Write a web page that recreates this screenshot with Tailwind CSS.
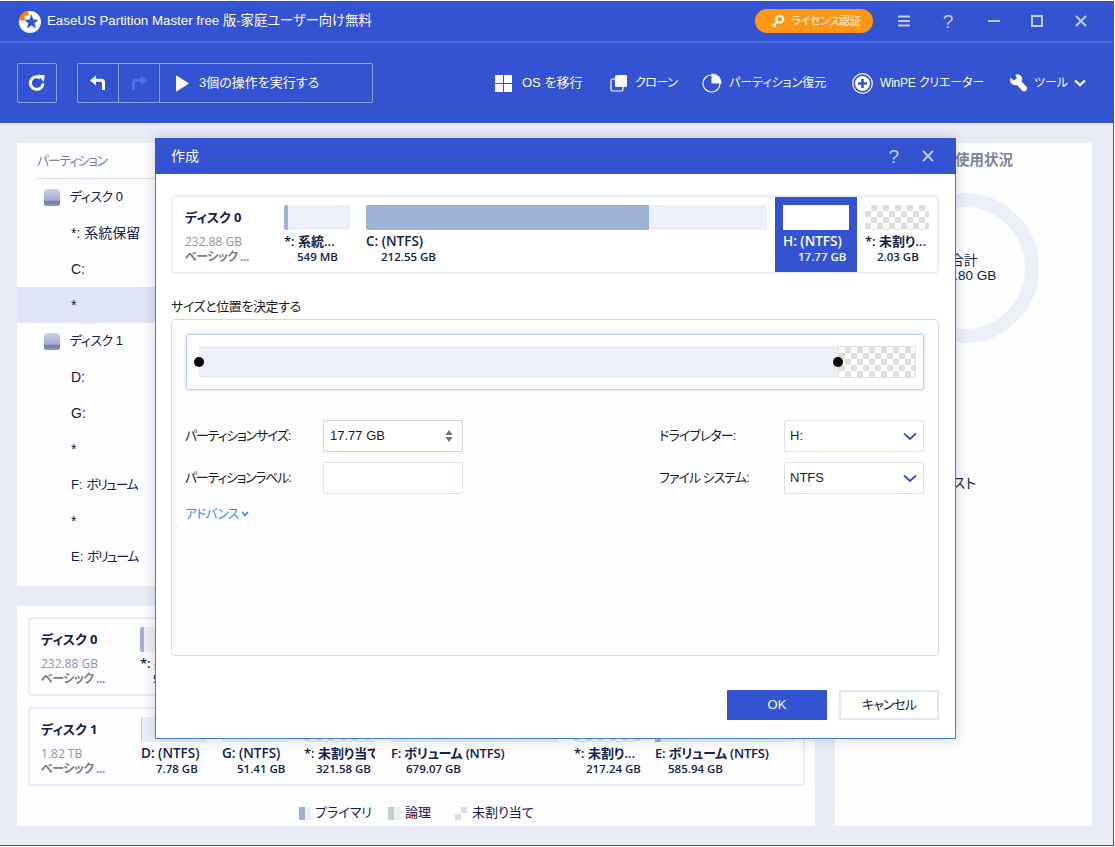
<!DOCTYPE html>
<html lang="ja">
	<head>
		<meta charset="UTF-8" />
		<title>EaseUS Partition Master</title>
		<script src="https://cdn.jsdelivr.net/npm/@tailwindcss/browser@4"></script>
	</head>
	<body class="bg-white font-['Liberation_Sans','Noto_Sans_CJK_JP',sans-serif] [font-feature-settings:'palt'] text-[13px] text-[#12204a]">
		<div class="relative mt-px w-[1114px] h-[845px] overflow-hidden border-r border-b border-[#3353d3] bg-[#e9ecf7]">
			<!-- TITLE BAR -->
			<header class="flex items-center h-[40px] pl-[18px] pr-[25px] bg-[#3353d3] text-white">
				<svg class="w-[23px] h-[23px] shrink-0" viewBox="0 0 24 24">
					<circle cx="12.500" cy="12.500" r="11.500" fill="#fff" />
					<path d="M1 11 A11 11 0 0 1 11 1 V6 H7 V11 Z" fill="#f58400" />
					<path d="M14 4.500 L16 10 L21.500 10.300 L17.200 13.800 L18.700 19.200 L14 16.100 L9.300 19.200 L10.800 13.800 L6.500 10.300 L12 10 Z" fill="#3353d3" />
				</svg>
				<span class="ml-[6px] text-[13.300px] whitespace-nowrap">EaseUS Partition Master free 版-家庭ユーザー向け無料</span>
				<div class="ml-auto flex items-center shrink-0 h-[24px] w-[118px] pl-[16px] gap-[6px] rounded-full bg-[#ff9614] text-[11px] tracking-[-0.2px] whitespace-nowrap">
					<svg class="w-[14px] h-[14px] shrink-0" viewBox="0 0 16 16">
						<circle cx="10" cy="6" r="4" fill="none" stroke="#fff" stroke-width="2.400" />
						<path d="M7 9 L2 14 M3.500 12.500 L5.500 14.500" stroke="#fff" stroke-width="2.400" fill="none" />
					</svg>
					<span>ライセンス認証</span>
				</div>
				<svg class="ml-[24px] w-[14px] h-[14px] shrink-0" viewBox="0 0 14 14"><path d="M1 2.500 H13 M1 7 H13 M1 11.500 H13" stroke="#c3cdf3" stroke-width="2" /></svg>
				<span class="ml-[29px] w-[16px] shrink-0 text-center text-[19px] leading-none text-[#c3cdf3]">?</span>
				<svg class="ml-[31px] w-[14px] h-[14px] shrink-0" viewBox="0 0 14 14"><path d="M1 7 H13" stroke="#c3cdf3" stroke-width="2" /></svg>
				<svg class="ml-[29px] w-[14px] h-[14px] shrink-0" viewBox="0 0 14 14"><rect x="2" y="2" width="10" height="10" fill="none" stroke="#c3cdf3" stroke-width="2" /></svg>
				<svg class="ml-[30px] w-[14px] h-[14px] shrink-0" viewBox="0 0 14 14"><path d="M2 2 L12 12 M12 2 L2 12" stroke="#c3cdf3" stroke-width="2" /></svg>
			</header>
			<div class="h-[2px] bg-[#4a6be2]"></div>

			<!-- TOOLBAR -->
			<nav class="flex items-center h-[80px] pl-[17px] bg-[#3353d3] text-white whitespace-nowrap">
				<button class="flex items-center justify-center shrink-0 w-[40px] h-[40px] rounded-[2px] border border-[#8fa3ea]">
					<svg class="w-[20px] h-[20px]" viewBox="0 0 20 20">
						<path d="M16 10.500 A6.300 6.300 0 1 1 13.500 5" fill="none" stroke="#fff" stroke-width="3" />
						<path d="M11 1.500 L18 2.500 L16.500 9 Z" fill="#fff" />
					</svg>
				</button>
				<div class="flex items-center shrink-0 ml-[20px] w-[296px] h-[40px] rounded-[2px] border border-[#8fa3ea]">
					<div class="flex items-center justify-center w-[41px] h-full border-r border-[#8fa3ea]">
						<svg class="w-[18px] h-[18px]" viewBox="0 0 18 18"><path d="M1 6.500 L7 1.500 V4.800 H12.500 Q16 4.800 16 8.500 V16 H13 V9.200 Q13 7.800 11.500 7.800 H7 V11.500 Z" fill="#fff" /></svg>
					</div>
					<div class="flex items-center justify-center w-[41px] h-full border-r border-[#8fa3ea]">
						<svg class="w-[18px] h-[18px]" viewBox="0 0 18 18"><path d="M17 6.500 L11 1.500 V4.800 H5.500 Q2 4.800 2 8.500 V16 H5 V9.200 Q5 7.800 6.500 7.800 H11 V11.500 Z" fill="#4f6fe6" /></svg>
					</div>
					<svg class="ml-[16px] w-[13px] h-[17px]" viewBox="0 0 14 18"><path d="M0 0 L14 9 L0 18 Z" fill="#fff" /></svg>
					<span class="ml-[10px] text-[13px]">3個の操作を実行する</span>
				</div>
				<!-- right tools -->
				<svg class="ml-[122px] w-[17px] h-[17px] shrink-0" viewBox="0 0 17 17"><path d="M0 0 H8 V8 H0 Z M9 0 H17 V8 H9 Z M0 9 H8 V17 H0 Z M9 9 H17 V17 H9 Z" fill="#fff" /></svg>
				<span class="ml-[10px] w-[59px] shrink-0">OS を移行</span>
				<svg class="ml-[29px] w-[18px] h-[18px] shrink-0" viewBox="0 0 18 18">
					<rect x="1" y="5" width="12" height="12" rx="1.500" fill="none" stroke="#fff" stroke-width="1.200" />
					<rect x="5" y="1" width="12" height="12" rx="1.500" fill="#fff" />
				</svg>
				<span class="ml-[7px] w-[41px] shrink-0 text-[12px] tracking-[-0.5px]">クローン</span>
				<svg class="ml-[26px] w-[20px] h-[20px] shrink-0" viewBox="0 0 20 20">
					<circle cx="9.500" cy="10.500" r="8.500" fill="none" stroke="#fff" stroke-width="1.200" />
					<path d="M9.500 0.500 A9.500 9.500 0 0 1 19.500 10.500 H9.500 Z" fill="#fff" />
				</svg>
				<span class="ml-[7px] w-[98px] shrink-0 text-[12px]">パーティション復元</span>
				<svg class="ml-[25px] w-[21px] h-[21px] shrink-0" viewBox="0 0 21 21">
					<circle cx="10.500" cy="10.500" r="9.800" fill="none" stroke="#fff" stroke-width="1.200" />
					<circle cx="10.500" cy="10.500" r="7.500" fill="#fff" />
					<path d="M10.500 6 V15 M6 10.500 H15" stroke="#3353d3" stroke-width="2.600" />
				</svg>
				<span class="ml-[7px] w-[103px] shrink-0 text-[12px] tracking-[-0.2px]">WinPE クリエーター</span>
				<svg class="ml-[27px] w-[17px] h-[18px] shrink-0" viewBox="0 0 17 18"><path d="M5.500 0.500 Q10 -0.500 11.800 3 Q12.800 5.500 11.500 7.500 L16.800 13 Q17.500 16 14.800 17.500 L12.500 17 L7 11 Q3 12 1 9 Q-0.500 6.500 0.500 3.500 L3.800 6.500 L6.800 4.500 Z" fill="#fff" /></svg>
				<span class="ml-[7px] w-[34px] shrink-0 text-[12px]">ツール</span>
				<svg class="ml-[6px] w-[12px] h-[8px] shrink-0" viewBox="0 0 12 8"><path d="M1 1.500 L6 6 L11 1.500" fill="none" stroke="#fff" stroke-width="2.200" /></svg>
			</nav>

			<!-- MAIN -->
			<main class="flex gap-[20px] pt-[20px] pl-[17px]">
				<div class="flex flex-col gap-[20px] w-[798px]">
					<!-- partition tree -->
					<section class="h-[443px] bg-[#fdfdff] text-[14px]">
						<div class="flex items-center h-[36px] mx-[20px] border-b border-[#d9deec] text-[13px] tracking-[-1.400px] text-[#7d8498]">パーティション</div>
						<div class="flex items-center h-[36px] pl-[27px]">
							<span class="w-[16px] h-[17px] rounded-t-[4px] rounded-b-[2px] bg-[linear-gradient(#c9d1e8,#a4b0d4_65%,#6b78a8_75%,#8f9cc6)]"></span>
							<span class="ml-[10px] text-[13px] tracking-[-0.5px]">ディスク 0</span>
						</div>
						<div class="flex items-center h-[36px] pl-[54px]">*: 系統保留</div>
						<div class="flex items-center h-[36px] pl-[54px]">C:</div>
						<div class="flex items-center h-[36px] pl-[54px] bg-[#e0e5f7]">*</div>
						<div class="flex items-center h-[36px] pl-[27px]">
							<span class="w-[16px] h-[17px] rounded-t-[4px] rounded-b-[2px] bg-[linear-gradient(#c9d1e8,#a4b0d4_65%,#6b78a8_75%,#8f9cc6)]"></span>
							<span class="ml-[10px] text-[13px] tracking-[-0.5px]">ディスク 1</span>
						</div>
						<div class="flex items-center h-[36px] pl-[54px]">D:</div>
						<div class="flex items-center h-[36px] pl-[54px]">G:</div>
						<div class="flex items-center h-[36px] pl-[54px]">*</div>
						<div class="h-[36px] pl-[54px] text-[13px] leading-[36px] whitespace-pre">F: <span class="tracking-[-1.600px]">ボリューム</span></div>
						<div class="flex items-center h-[36px] pl-[54px]">*</div>
						<div class="h-[36px] pl-[54px] text-[13px] leading-[36px] whitespace-pre">E: <span class="tracking-[-1.600px]">ボリューム</span></div>
					</section>

					<!-- disk map -->
					<section class="h-[220px] pl-[11px] pr-[10px] pt-[11px] bg-[#fdfdff] font-['Open_Sans','Noto_Sans_CJK_JP',sans-serif]">
						<div class="flex h-[79px] rounded-[4px] border-2 border-[#e9edf7]">
							<div class="w-[103px] pl-[11px] pt-[10px] shrink-0">
								<div class="font-bold leading-[20px]">ディスク 0</div>
								<div class="mt-[7px] text-[12px] leading-[15px] text-[#8d94ad]">232.88 GB</div>
								<div class="text-[12px] tracking-[-0.5px] leading-[15px] font-semibold text-[#757c94] whitespace-nowrap">ベーシック ...</div>
							</div>
							<div class="w-[82px] px-[7px] pt-[8px]">
								<div class="h-[25px] rounded-[2px] bg-[#eceff8] border-l-4 border-[#9db3d6]"></div>
								<div class="mt-[2px] text-[13px] leading-[18px] font-semibold whitespace-nowrap overflow-hidden">*: 系統...</div>
								<div class="pl-[13px] text-[11.500px] leading-[13px] font-semibold whitespace-nowrap">549 MB</div>
							</div>
						</div>
						<div class="flex h-[79px] mt-[11px] rounded-[4px] border-2 border-[#e9edf7]">
							<div class="w-[103px] pl-[11px] pt-[10px] shrink-0">
								<div class="font-bold leading-[20px]">ディスク 1</div>
								<div class="mt-[7px] text-[12px] leading-[15px] text-[#8d94ad]">1.82 TB</div>
								<div class="text-[12px] tracking-[-0.5px] leading-[15px] font-semibold text-[#757c94] whitespace-nowrap">ベーシック ...</div>
							</div>
							<div class="w-[81px] px-[8px] pt-[8px]">
								<div class="h-[25px] bg-[#eceff8] border-l border-[#b9d1bd]"></div>
								<div class="mt-[2px] text-[13.500px] leading-[18px] font-semibold whitespace-nowrap">D: (NTFS)</div>
								<div class="pl-[15px] text-[11.500px] leading-[13px] font-semibold whitespace-nowrap">7.78 GB</div>
							</div>
							<div class="w-[82px] px-[8px] pt-[8px]">
								<div class="h-[25px] bg-[#eceff8]"></div>
								<div class="mt-[2px] text-[13.500px] leading-[18px] font-semibold whitespace-nowrap">G: (NTFS)</div>
								<div class="pl-[15px] text-[11.500px] leading-[13px] font-semibold whitespace-nowrap">51.41 GB</div>
							</div>
							<div class="w-[87px] px-[8px] pt-[8px]">
								<div class="h-[25px] bg-[repeating-conic-gradient(#dddddd_0_25%,#ffffff_0_50%)] bg-size-[12px_12px]"></div>
								<div class="mt-[2px] text-[13px] leading-[18px] font-semibold whitespace-nowrap overflow-hidden">*: 未割り当て</div>
								<div class="pl-[12px] text-[11.500px] leading-[13px] font-semibold whitespace-nowrap">321.58 GB</div>
							</div>
							<div class="w-[183px] px-[8px] pt-[8px]">
								<div class="h-[25px] bg-[#eceff8]"></div>
								<div class="mt-[2px] text-[13px] tracking-[-0.2px] leading-[18px] font-semibold whitespace-nowrap">F: ボリューム (NTFS)</div>
								<div class="pl-[15px] text-[11.500px] leading-[13px] font-semibold whitespace-nowrap">679.07 GB</div>
							</div>
							<div class="w-[82px] px-[8px] pt-[8px]">
								<div class="h-[25px] bg-[repeating-conic-gradient(#dddddd_0_25%,#ffffff_0_50%)] bg-size-[12px_12px]"></div>
								<div class="mt-[2px] text-[13px] leading-[18px] font-semibold whitespace-nowrap overflow-hidden">*: 未割り...</div>
								<div class="pl-[12px] text-[11.500px] leading-[13px] font-semibold whitespace-nowrap">217.24 GB</div>
							</div>
							<div class="flex-1 -ml-px px-[8px] pt-[8px]">
								<div class="h-[25px] bg-[#eceff8] border-l-[6px] border-[#9db3d6]"></div>
								<div class="mt-[2px] text-[13px] tracking-[-0.2px] leading-[18px] font-semibold whitespace-nowrap">E: ボリューム (NTFS)</div>
								<div class="pl-[13px] text-[11.500px] leading-[13px] font-semibold whitespace-nowrap">585.94 GB</div>
							</div>
						</div>
						<div class="flex items-center mt-[18px] h-[18px] pl-[271px] font-['Liberation_Sans','Noto_Sans_CJK_JP',sans-serif]">
							<span class="w-[6px] h-[13px] bg-[#9db3d6]"></span><span class="w-[6px] h-[13px] bg-[#e9eef8]"></span>
							<span class="ml-[4px] w-[52px] whitespace-nowrap">プライマリ</span>
							<span class="ml-[21px] w-[6px] h-[13px] bg-[#bdd3c2]"></span><span class="w-[6px] h-[13px] bg-[#e9eef8]"></span>
							<span class="ml-[5px] w-[28px] whitespace-nowrap">論理</span>
							<span class="ml-[22px] w-[12px] h-[13px] bg-[repeating-conic-gradient(#dddddd_0_25%,#ffffff_0_50%)] bg-size-[12px_13px]"></span>
							<span class="ml-[5px] whitespace-nowrap">未割り当て</span>
						</div>
					</section>
				</div>

				<!-- disk usage -->
				<aside class="relative w-[257px] h-[683px] rounded-[2px] bg-[#fdfdff]">
					<div class="pt-[8px] w-[178px] text-right text-[14.500px] leading-[18px] font-semibold text-[#7d8498] whitespace-nowrap">ディスク使用状況</div>
					<div class="flex flex-col items-center justify-center ml-[54px] mt-[24px] w-[150px] h-[150px] rounded-full border-[14px] border-[#ebeff8] text-[13.500px] leading-[15px]">
						<span>合計</span>
						<span>232.80 GB</span>
					</div>
					<div class="mt-[131px] w-[141px] text-right text-[14px] leading-[18px] whitespace-nowrap">ディスクリスト</div>
				</aside>
			</main>

			<!-- CREATE DIALOG -->
			<div class="absolute left-[155px] top-[137px] flex flex-col w-[801px] h-[601px] border border-t-0 border-[#3b86c6] bg-white shadow-[0_0_12px_rgba(40,50,90,0.22)]">
				<div class="flex items-center shrink-0 h-[36px] -mx-px pl-[16px] bg-[#3353d3] text-white">
					<span class="text-[14px]">作成</span>
					<span class="ml-auto text-[19px] leading-none text-[#c3cdf3]">?</span>
					<svg class="ml-[23px] mr-[22px] w-[12px] h-[12px]" viewBox="0 0 12 12"><path d="M1 1 L11 11 M11 1 L1 11" stroke="#c3cdf3" stroke-width="1.800" /></svg>
				</div>

				<div class="flex-1 pl-[15px] pr-[16px] pt-[21px] bg-white">
					<!-- disk strip -->
					<div class="flex h-[79px] rounded-[4px] border-2 border-[#e9edf7] font-['Open_Sans','Noto_Sans_CJK_JP',sans-serif]">
						<div class="w-[103px] pl-[12px] pt-[10px] shrink-0">
							<div class="font-bold leading-[20px]">ディスク 0</div>
							<div class="mt-[7px] text-[12px] leading-[15px] text-[#8d94ad]">232.88 GB</div>
							<div class="text-[12px] tracking-[-0.5px] leading-[15px] font-semibold text-[#757c94] whitespace-nowrap">ベーシック ...</div>
						</div>
						<div class="w-[82px] px-[8px] pt-[8px]">
							<div class="h-[25px] rounded-[2px] bg-[#eceff8] border-l-4 border-[#9db3d6]"></div>
							<div class="mt-[2px] text-[13px] leading-[18px] font-semibold whitespace-nowrap overflow-hidden">*: 系統...</div>
							<div class="pl-[13px] text-[11.500px] leading-[13px] font-semibold whitespace-nowrap">549 MB</div>
						</div>
						<div class="w-[417px] px-[8px] pt-[8px]">
							<div class="h-[25px] rounded-[2px] bg-[#eceff8]">
								<div class="h-full w-[283px] rounded-l-[2px] bg-[#9db3d6]"></div>
							</div>
							<div class="mt-[2px] text-[13.500px] leading-[18px] font-semibold">C: (NTFS)</div>
							<div class="pl-[15px] text-[11.500px] leading-[13px] font-semibold whitespace-nowrap">212.55 GB</div>
						</div>
						<div class="w-[82px] px-[8px] pt-[8px] bg-[#3353d3] text-white">
							<div class="h-[25px] bg-white"></div>
							<div class="mt-[2px] text-[13.500px] leading-[18px] font-semibold">H: (NTFS)</div>
							<div class="pl-[15px] text-[11.500px] leading-[13px] font-semibold whitespace-nowrap">17.77 GB</div>
						</div>
						<div class="flex-1 px-[8px] pt-[8px]">
							<div class="h-[25px] bg-[repeating-conic-gradient(#dddddd_0_25%,#ffffff_0_50%)] bg-size-[12px_12px]"></div>
							<div class="mt-[2px] text-[13px] leading-[18px] font-semibold whitespace-nowrap overflow-hidden">*: 未割り...</div>
							<div class="pl-[12px] text-[11.500px] leading-[13px] font-semibold whitespace-nowrap">2.03 GB</div>
						</div>
					</div>

					<div class="mt-[24px] leading-[18px] tracking-[-0.4px] text-[#1c1c1c]">サイズと位置を決定する</div>

					<!-- size & position -->
					<div class="mt-[3px] h-[337px] px-[14px] pt-[14px] rounded-[4px] border border-[#d3dbe8] bg-[#fdfdfe] text-[#1c1c1c]">
						<div class="relative h-[56px] rounded-[3px] bg-white border border-[#b9d4f8] shadow-[0_0_3px_#b9d4f8]">
							<div class="flex ml-[12px] mr-[7px] mt-[11px] h-[32px]">
								<div class="w-[639px] bg-[#ebeff8]"></div>
								<div class="flex-1 border border-[#e2e2e2] bg-[repeating-conic-gradient(#dddddd_0_25%,#ffffff_0_50%)] bg-size-[12px_12px]"></div>
							</div>
							<span class="absolute left-[7px] top-[22px] w-[10px] h-[10px] rounded-full bg-black"></span>
							<span class="absolute left-[646px] top-[22px] w-[10px] h-[10px] rounded-full bg-black"></span>
						</div>

						<div class="grid grid-cols-[138px_140px_196px_125px_140px] items-center gap-y-[10px] mt-[30px] -ml-px">
							<span class="whitespace-nowrap tracking-[-1.200px]">パーティションサイズ:</span>
							<div class="flex items-center h-[32px] px-[6px] border border-[#d4d4d4] bg-white">
								<span>17.77 GB</span>
								<svg class="ml-auto mr-[3px] w-[8px] h-[14px]" viewBox="0 0 8 14"><path d="M4 1 L7.500 6 H0.500 Z M4 13 L7.500 8 H0.500 Z" fill="#6e6e6e" /></svg>
							</div>
							<span></span>
							<span class="whitespace-nowrap tracking-[-0.900px]">ドライブレター:</span>
							<div class="flex items-center h-[32px] px-[5px] rounded-[2px] border border-[#d9e0f1] bg-white">
								<span>H:</span>
								<svg class="ml-auto mr-[1px] w-[14px] h-[9px]" viewBox="0 0 14 9"><path d="M1 1.500 L7 7 L13 1.500" fill="none" stroke="#3353d3" stroke-width="2" /></svg>
							</div>
							<span class="whitespace-nowrap tracking-[-1.300px]">パーティションラベル:</span>
							<div class="h-[32px] rounded-[2px] border border-[#d9e0f1] bg-white"></div>
							<span></span>
							<span class="whitespace-nowrap tracking-[-1px]">ファイル システム:</span>
							<div class="flex items-center h-[32px] px-[5px] rounded-[2px] border border-[#d9e0f1] bg-white">
								<span>NTFS</span>
								<svg class="ml-auto mr-[1px] w-[14px] h-[9px]" viewBox="0 0 14 9"><path d="M1 1.500 L7 7 L13 1.500" fill="none" stroke="#3353d3" stroke-width="2" /></svg>
							</div>
						</div>
						<div class="flex items-center gap-[3px] mt-[10px] -ml-px text-[#3f8ef2]">
							<span class="tracking-[-1px]">アドバンス</span>
							<svg class="w-[8px] h-[6px]" viewBox="0 0 8 6"><path d="M1 1 L4 4.500 L7 1" fill="none" stroke="#3f8ef2" stroke-width="1.600" /></svg>
						</div>
					</div>

					<div class="flex justify-end gap-[12px] mt-[34px]">
						<button class="w-[100px] h-[30px] bg-[#3353d3] text-white">OK</button>
						<button class="w-[100px] h-[30px] border-2 border-[#e3e7f1] bg-white text-[#1c1c1c] tracking-[-1px]">キャンセル</button>
					</div>
				</div>
			</div>
		</div>
	</body>
</html>
